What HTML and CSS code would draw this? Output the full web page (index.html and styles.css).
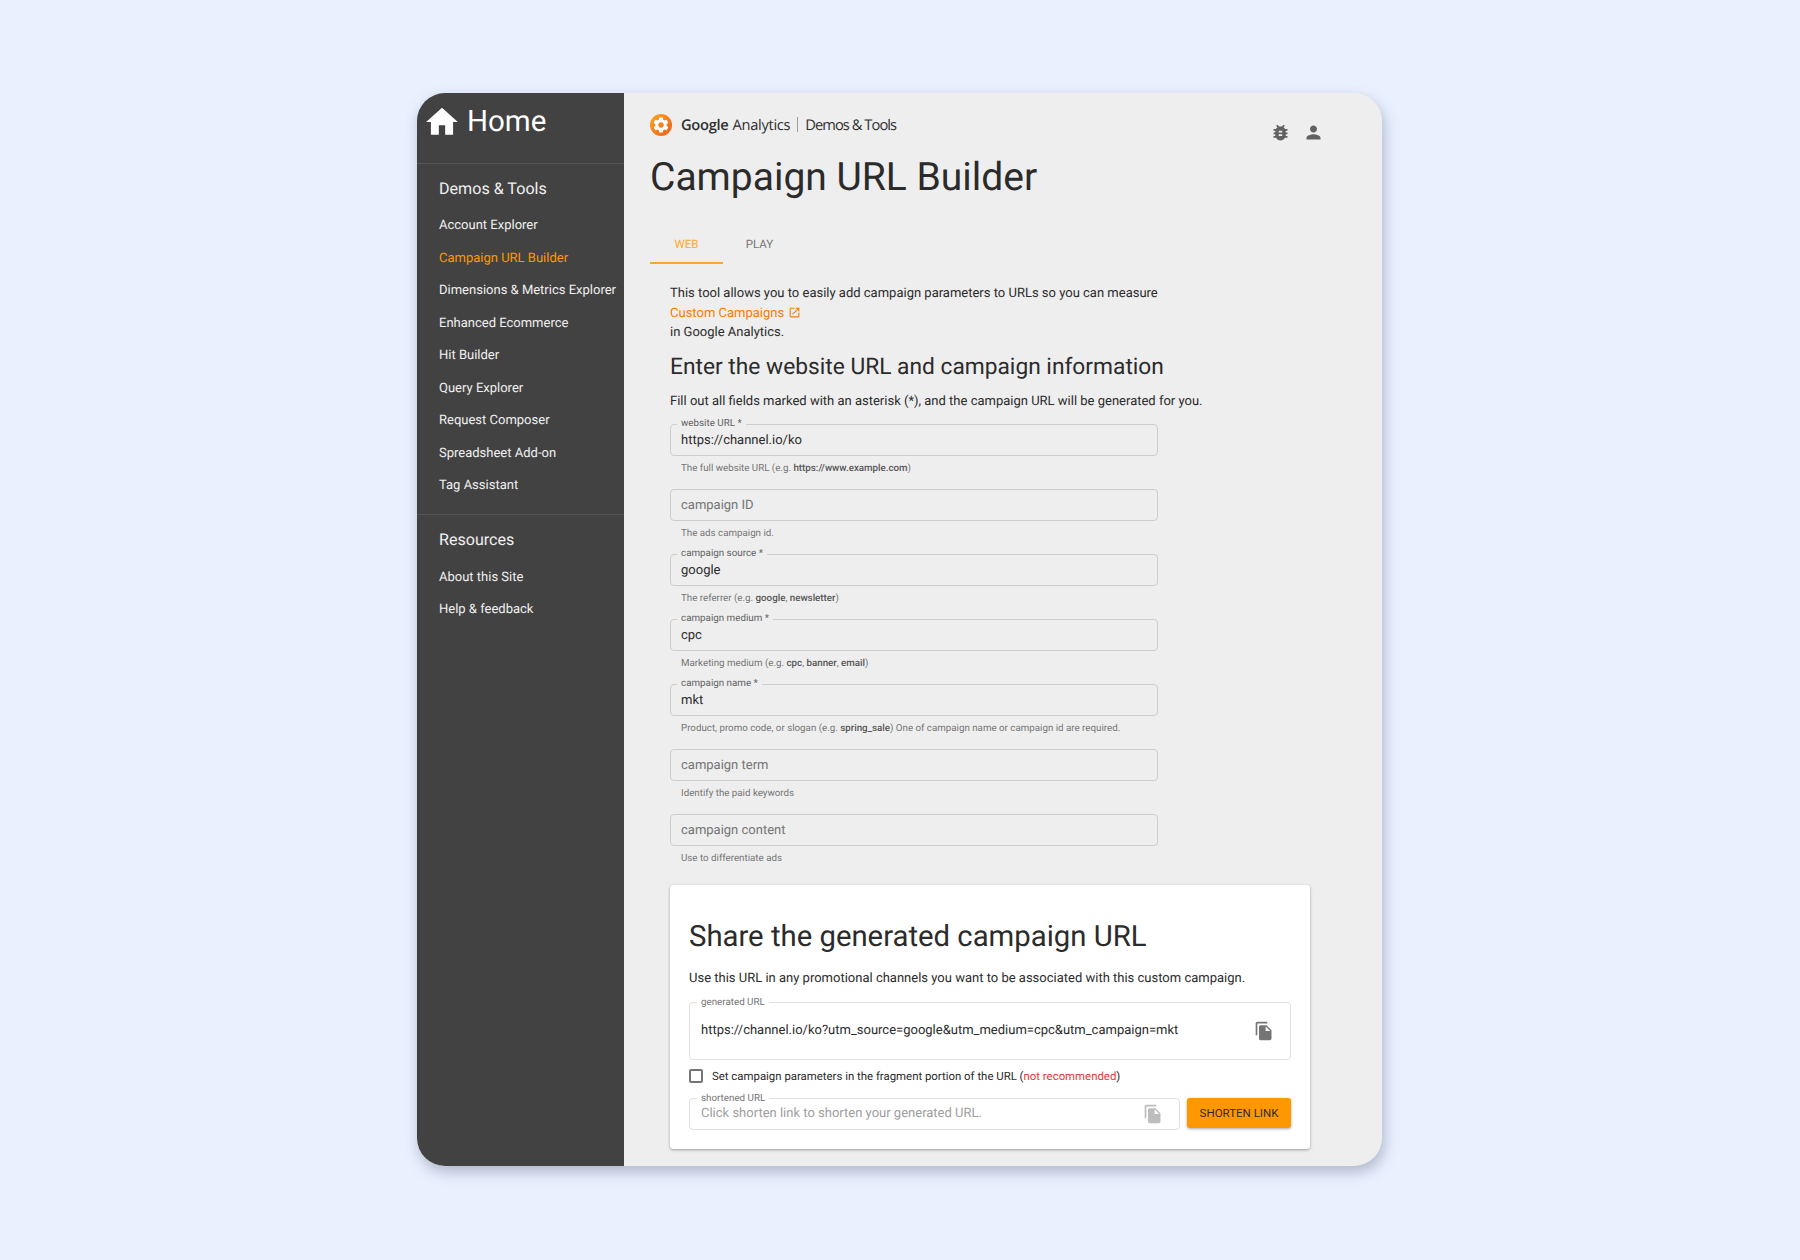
FILE: index.html
```html
<!DOCTYPE html>
<html lang="en">
<head>
  <meta charset="UTF-8" />
  <title>Campaign URL Builder</title>
  <link rel="stylesheet" href="styles.css">
</head>
<body>

  <div class="window">

    <!-- Sidebar -->
    <aside class="sidebar">
      <a class="side-home">
        <svg viewBox="0 0 24 24" class="home-icon"><path d="M10 20v-6h4v6h5v-8h3L12 3 2 12h3v8z"/></svg>
        Home
      </a>
      <div class="side-group">
        <h3>Demos &amp; Tools</h3>
        <ul>
          <li>Account Explorer</li>
          <li class="active">Campaign URL Builder</li>
          <li>Dimensions &amp; Metrics Explorer</li>
          <li>Enhanced Ecommerce</li>
          <li>Hit Builder</li>
          <li>Query Explorer</li>
          <li>Request Composer</li>
          <li>Spreadsheet Add-on</li>
          <li>Tag Assistant</li>
        </ul>
      </div>
      <div class="side-group">
        <h3>Resources</h3>
        <ul>
          <li>About this Site</li>
          <li>Help &amp; feedback</li>
        </ul>
      </div>
    </aside>

    <!-- Main -->
    <main class="main">
      <div class="top-row">
        <div class="logo">
          <svg viewBox="0 0 24 24" class="logo-icon">
            <defs>
              <linearGradient id="logoFill" x1="0" y1="0" x2="1" y2="1">
                <stop offset="0" stop-color="#fbaa1d"/>
                <stop offset="1" stop-color="#ee5a1d"/>
              </linearGradient>
            </defs>
            <circle cx="12" cy="12" r="12" fill="url(#logoFill)"/>
            <path transform="translate(1.8 1.8) scale(.85)" fill="#fff" d="M19.14 12.94c.04-.3.06-.61.06-.94 0-.32-.02-.64-.07-.94l2.03-1.58c.18-.14.23-.41.12-.61l-1.92-3.32c-.12-.22-.37-.29-.59-.22l-2.39.96c-.5-.38-1.03-.7-1.62-.94l-.36-2.54c-.04-.24-.24-.41-.48-.41h-3.84c-.24 0-.43.17-.47.41l-.36 2.54c-.59.24-1.13.57-1.62.94l-2.39-.96c-.22-.08-.47 0-.59.22L2.74 8.87c-.12.21-.08.47.12.61l2.03 1.58c-.05.3-.09.63-.09.94s.02.64.07.94l-2.03 1.58c-.18.14-.23.41-.12.61l1.92 3.32c.12.22.37.29.59.22l2.39-.96c.5.38 1.03.7 1.62.94l.36 2.54c.05.24.24.41.48.41h3.84c.24 0 .44-.17.47-.41l.36-2.54c.59-.24 1.13-.56 1.62-.94l2.39.96c.22.08.47 0 .59-.22l1.92-3.32c.12-.22.07-.47-.12-.61l-2.01-1.58zM12 15.6c-1.98 0-3.6-1.62-3.6-3.6s1.62-3.6 3.6-3.6 3.6 1.62 3.6 3.6-1.62 3.6-3.6 3.6z"/>
          </svg>
          <span class="logo-google">Google</span>
          <span class="logo-text">Analytics</span>
          <span class="logo-bar"></span>
          <span class="logo-text logo-tools">Demos &amp; Tools</span>
        </div>
        <div class="top-icons">
          <svg viewBox="0 0 24 24" class="top-icon"><path d="M20 8h-2.81c-.45-.78-1.07-1.45-1.82-1.96L17 4.41 15.59 3l-2.17 2.17C12.96 5.06 12.49 5 12 5c-.49 0-.96.06-1.41.17L8.41 3 7 4.41l1.62 1.63C7.88 6.55 7.26 7.22 6.81 8H4v2h2.09c-.05.33-.09.66-.09 1v1H4v2h2v1c0 .34.04.67.09 1H4v2h2.81c1.04 1.79 2.97 3 5.19 3s4.15-1.21 5.19-3H20v-2h-2.09c.05-.33.09-.66.09-1v-1h2v-2h-2v-1c0-.34-.04-.67-.09-1H20V8zm-6 8h-4v-2h4v2zm0-4h-4v-2h4v2z"/></svg>
          <svg viewBox="0 0 24 24" class="top-icon"><path d="M12 12c2.21 0 4-1.79 4-4s-1.79-4-4-4-4 1.79-4 4 1.79 4 4 4zm0 2c-2.67 0-8 1.34-8 4v2h16v-2c0-2.66-5.33-4-8-4z"/></svg>
        </div>
      </div>

      <h1>Campaign URL Builder</h1>

      <div class="tabs">
        <div class="tab active">WEB</div>
        <div class="tab">PLAY</div>
      </div>

      <section class="form-area">
        <p class="intro">This tool allows you to easily add campaign parameters to URLs so you can measure<br>
          <a class="link">Custom Campaigns
            <svg viewBox="0 0 24 24" class="ext-icon"><path d="M19 19H5V5h7V3H5c-1.11 0-2 .9-2 2v14c0 1.1.89 2 2 2h14c1.1 0 2-.9 2-2v-7h-2v7zM14 3v2h3.59l-9.83 9.83 1.41 1.41L19 6.41V10h2V3h-7z"/></svg>
          </a><br>
          in Google Analytics.</p>

        <h2>Enter the website URL and campaign information</h2>
        <p class="fill-note">Fill out all fields marked with an asterisk (*), and the campaign URL will be generated for you.</p>

        <div class="field">
          <label>website URL *</label>
          <div class="input">https://channel.io/ko</div>
          <div class="helper">The full website URL (e.g. <b>https://www.example.com</b>)</div>
        </div>
        <div class="field">
          <div class="input empty">campaign ID</div>
          <div class="helper">The ads campaign id.</div>
        </div>
        <div class="field">
          <label>campaign source *</label>
          <div class="input">google</div>
          <div class="helper">The referrer (e.g. <b>google</b>, <b>newsletter</b>)</div>
        </div>
        <div class="field">
          <label>campaign medium *</label>
          <div class="input">cpc</div>
          <div class="helper">Marketing medium (e.g. <b>cpc</b>, <b>banner</b>, <b>email</b>)</div>
        </div>
        <div class="field">
          <label>campaign name *</label>
          <div class="input">mkt</div>
          <div class="helper">Product, promo code, or slogan (e.g. <b>spring_sale</b>) One of campaign name or campaign id are required.</div>
        </div>
        <div class="field">
          <div class="input empty">campaign term</div>
          <div class="helper">Identify the paid keywords</div>
        </div>
        <div class="field">
          <div class="input empty">campaign content</div>
          <div class="helper">Use to differentiate ads</div>
        </div>

        <!-- Generated URL card -->
        <div class="card">
          <h2 class="card-title">Share the generated campaign URL</h2>
          <p class="card-note">Use this URL in any promotional channels you want to be associated with this custom campaign.</p>

          <div class="out-box generated">
            <label>generated URL</label>
            <span class="out-text">https://channel.io/ko?utm_source=google&amp;utm_medium=cpc&amp;utm_campaign=mkt</span>
            <svg viewBox="0 0 24 24" class="copy-icon"><path d="M16 1H4c-1.1 0-2 .9-2 2v14h2V3h12V1zm-1 4l6 6v10c0 1.1-.9 2-2 2H7.99C6.89 23 6 22.1 6 21l.01-14c0-1.1.89-2 1.99-2h7zm-1 7h5.5L14 6.5V12z"/></svg>
          </div>

          <div class="check-row">
            <span class="checkbox"></span>
            <span>Set campaign parameters in the fragment portion of the URL (<em>not recommended</em>)</span>
          </div>

          <div class="short-row">
            <div class="out-box shortened">
              <label>shortened URL</label>
              <span class="out-text">Click shorten link to shorten your generated URL.</span>
              <svg viewBox="0 0 24 24" class="copy-icon"><path d="M16 1H4c-1.1 0-2 .9-2 2v14h2V3h12V1zm-1 4l6 6v10c0 1.1-.9 2-2 2H7.99C6.89 23 6 22.1 6 21l.01-14c0-1.1.89-2 1.99-2h7zm-1 7h5.5L14 6.5V12z"/></svg>
            </div>
            <button class="shorten-btn">SHORTEN LINK</button>
          </div>
        </div>
      </section>
    </main>
  </div>

</body>
</html>
```
FILE: styles.css
```css
/* Global */
body {
  margin: 0;
  height: 1260px;
  overflow: hidden;
  background-color: #e9f0fe;
  font-family: Roboto, "Liberation Sans", sans-serif;
  color: #2b2b2b;
  text-rendering: geometricPrecision;
}
h1, h2, h3, p, ul {
  margin: 0;
  padding: 0;
  font-weight: 400;
}
/* App window */
.window {
  display: flex;
  width: 965px;
  height: 1073px;
  margin: 93px 0 0 417px;
  border-radius: 28px;
  overflow: hidden;
  background-color: #eeeeee;
  box-shadow: 2px 6px 14px rgba(70, 80, 110, 0.35);
}
/* Sidebar */
.sidebar {
  flex: 0 0 207px;
  background-color: #424242;
  color: #f0f0f0;
}
.side-home {
  display: flex;
  align-items: center;
  gap: 6px;
  height: 71px;
  padding: 0 0 13px 6px;
  box-sizing: border-box;
  font-size: 29.5px;
  color: #fff;
  border-bottom: 1px solid #555;
}
.home-icon {
  width: 38px;
  height: 38px;
  fill: #fff;
}
.side-group {
  padding: 9px 0 11px 22px;
  border-bottom: 1px solid #555;
}
.side-group:last-child {
  border-bottom: none;
}
.side-group h3 {
  font-size: 16.1px;
  line-height: 32px;
  margin-bottom: 5px;
}
.side-group + .side-group h3 {
  margin-bottom: 6px;
}
.side-group ul {
  list-style: none;
}
.side-group li {
  font-size: 13px;
  line-height: 32.5px;
}
.side-group li.active {
  color: #ff9800;
}
/* Main */
.main {
  flex: 1;
  padding: 13px 58px 0 26px;
  min-width: 0;
}
.top-row {
  display: flex;
  justify-content: space-between;
  align-items: center;
}
.logo {
  display: flex;
  align-items: center;
  font-family: "Open Sans", sans-serif;
  font-size: 14.7px;
  letter-spacing: -0.3px;
  color: #303030;
}
.logo-icon {
  width: 22px;
  height: 22px;
  margin-right: 9px;
}
.logo-google {
  font-weight: 600;
  margin-right: 4px;
}
.logo-bar {
  width: 1px;
  height: 15px;
  background-color: #9e9e9e;
  margin: 0 7px;
}
.logo-tools {
  letter-spacing: -0.95px;
}
.top-icons {
  display: flex;
  gap: 12px;
  margin-top: 16px;
}
.top-icon {
  width: 21px;
  height: 21px;
  fill: #616161;
}
h1 {
  font-size: 39px;
  line-height: 50px;
  margin-top: 9px;
}
/* Tabs */
.tabs {
  display: flex;
  margin-top: 23px;
}
.tab {
  width: 73px;
  height: 37px;
  line-height: 38px;
  text-align: center;
  font-size: 11.5px;
  color: #757575;
}
.tab.active {
  color: #ffa726;
  border-bottom: 2px solid #ffa726;
}
/* Form */
.form-area {
  padding: 20px 0 0 20px;
  width: 640px;
}
.intro {
  font-size: 13px;
  line-height: 19.5px;
}
.link {
  color: #f57c00;
}
.ext-icon {
  width: 13px;
  height: 13px;
  fill: #f57c00;
  vertical-align: -2px;
  margin-left: 1px;
}
h2 {
  font-size: 22.75px;
  line-height: 30px;
  margin-top: 9px;
}
.fill-note {
  font-size: 13px;
  line-height: 20px;
  margin-top: 10px;
}
.field {
  position: relative;
  width: 488px;
  height: 65px;
}
.field:first-of-type {
  margin-top: 12px;
}
.input {
  box-sizing: border-box;
  height: 32px;
  padding: 0 10px;
  border: 1px solid #cdcdcd;
  border-radius: 4px;
  font-size: 13px;
  line-height: 31px;
}
.input.empty {
  color: #757575;
}
.field label,
.out-box label {
  position: absolute;
  top: -6px;
  left: 7px;
  padding: 0 4px 0 4px;
  font-size: 9.8px;
  line-height: 12px;
  color: #616161;
}
.field label {
  background-color: #eeeeee;
}
.helper {
  padding: 6px 0 0 11px;
  font-size: 9.75px;
  line-height: 14px;
  color: #757575;
}
.helper b {
  font-weight: 500;
  color: #555;
}
/* Card */
.card {
  width: 640px;
  height: 264px;
  box-sizing: border-box;
  margin-top: 6px;
  padding: 19px 19px 0;
  background-color: #fff;
  border-radius: 3px;
  box-shadow: 0 1px 3px rgba(0, 0, 0, 0.35);
}
.card-title {
  font-size: 29.3px;
  line-height: 34px;
  margin: 16px 0 0;
}
.card-note {
  font-size: 13px;
  line-height: 20px;
  margin-top: 15px;
}
.out-box {
  position: relative;
  display: flex;
  box-sizing: border-box;
  padding: 0 16px 0 11px;
  border: 1px solid #e0e0e0;
  border-radius: 4px;
}
.out-box label {
  background-color: #fff;
  color: #757575;
}
.generated {
  height: 58px;
  margin-top: 13px;
  padding-top: 20px;
  justify-content: space-between;
  font-size: 13px;
}
.generated .copy-icon {
  margin-top: -2px;
}
.copy-icon {
  width: 20px;
  height: 20px;
  fill: #757575;
}
.check-row {
  display: flex;
  align-items: center;
  gap: 9px;
  height: 32px;
  font-size: 11.4px;
}
.checkbox {
  width: 10px;
  height: 10px;
  border: 2px solid #757575;
  border-radius: 2px;
}
.check-row em {
  font-style: normal;
  color: #e53935;
}
.short-row {
  display: flex;
  gap: 7px;
  margin-top: 6px;
}
.shortened {
  flex: 1;
  height: 32px;
  align-items: center;
  justify-content: space-between;
  font-size: 13px;
  color: #9e9e9e;
}
.shortened .copy-icon {
  fill: #bdbdbd;
}
.shorten-btn {
  width: 104px;
  height: 30px;
  padding: 0;
  border: none;
  border-radius: 3px;
  background-color: #ff9800;
  color: #2b2b2b;
  font-family: inherit;
  font-size: 11.5px;
  font-weight: 400;
  box-shadow: 0 1px 3px rgba(0, 0, 0, 0.35);
}
```
